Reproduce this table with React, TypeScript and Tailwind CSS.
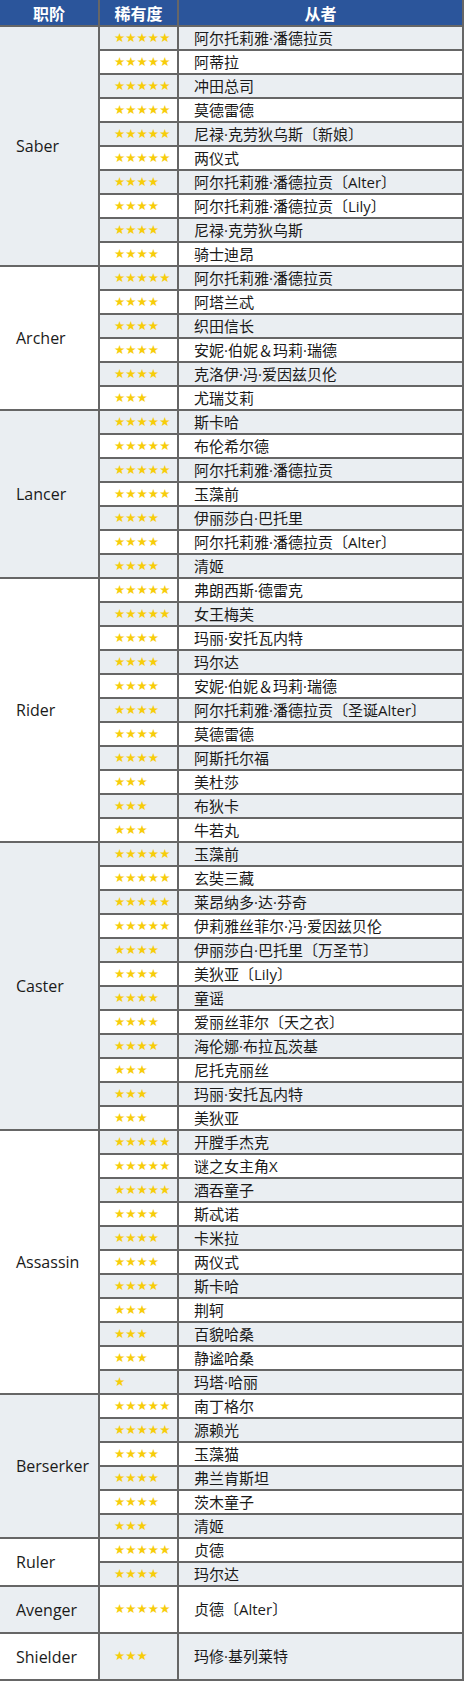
const groups: { cls: string; rows: [number, string][]; tall?: boolean }[] = [
  {
    cls: 'Saber',
    rows: [
      [5, '阿尔托莉雅·潘德拉贡'],
      [5, '阿蒂拉'],
      [5, '冲田总司'],
      [5, '莫德雷德'],
      [5, '尼禄·克劳狄乌斯〔新娘〕'],
      [5, '两仪式'],
      [4, '阿尔托莉雅·潘德拉贡〔Alter〕'],
      [4, '阿尔托莉雅·潘德拉贡〔Lily〕'],
      [4, '尼禄·克劳狄乌斯'],
      [4, '骑士迪昂'],
    ],
  },
  {
    cls: 'Archer',
    rows: [
      [5, '阿尔托莉雅·潘德拉贡'],
      [4, '阿塔兰忒'],
      [4, '织田信长'],
      [4, '安妮·伯妮＆玛莉·瑞德'],
      [4, '克洛伊·冯·爱因兹贝伦'],
      [3, '尤瑞艾莉'],
    ],
  },
  {
    cls: 'Lancer',
    rows: [
      [5, '斯卡哈'],
      [5, '布伦希尔德'],
      [5, '阿尔托莉雅·潘德拉贡'],
      [5, '玉藻前'],
      [4, '伊丽莎白·巴托里'],
      [4, '阿尔托莉雅·潘德拉贡〔Alter〕'],
      [4, '清姬'],
    ],
  },
  {
    cls: 'Rider',
    rows: [
      [5, '弗朗西斯·德雷克'],
      [5, '女王梅芙'],
      [4, '玛丽·安托瓦内特'],
      [4, '玛尔达'],
      [4, '安妮·伯妮＆玛莉·瑞德'],
      [4, '阿尔托莉雅·潘德拉贡〔圣诞Alter〕'],
      [4, '莫德雷德'],
      [4, '阿斯托尔福'],
      [3, '美杜莎'],
      [3, '布狄卡'],
      [3, '牛若丸'],
    ],
  },
  {
    cls: 'Caster',
    rows: [
      [5, '玉藻前'],
      [5, '玄奘三藏'],
      [5, '莱昂纳多·达·芬奇'],
      [5, '伊莉雅丝菲尔·冯·爱因兹贝伦'],
      [4, '伊丽莎白·巴托里〔万圣节〕'],
      [4, '美狄亚〔Lily〕'],
      [4, '童谣'],
      [4, '爱丽丝菲尔〔天之衣〕'],
      [4, '海伦娜·布拉瓦茨基'],
      [3, '尼托克丽丝'],
      [3, '玛丽·安托瓦内特'],
      [3, '美狄亚'],
    ],
  },
  {
    cls: 'Assassin',
    rows: [
      [5, '开膛手杰克'],
      [5, '谜之女主角X'],
      [5, '酒吞童子'],
      [4, '斯忒诺'],
      [4, '卡米拉'],
      [4, '两仪式'],
      [4, '斯卡哈'],
      [3, '荆轲'],
      [3, '百貌哈桑'],
      [3, '静谧哈桑'],
      [1, '玛塔·哈丽'],
    ],
  },
  {
    cls: 'Berserker',
    rows: [
      [5, '南丁格尔'],
      [5, '源赖光'],
      [4, '玉藻猫'],
      [4, '弗兰肯斯坦'],
      [4, '茨木童子'],
      [3, '清姬'],
    ],
  },
  {
    cls: 'Ruler',
    rows: [
      [5, '贞德'],
      [4, '玛尔达'],
    ],
  },
  { cls: 'Avenger', rows: [[5, '贞德〔Alter〕']], tall: true },
  { cls: 'Shielder', rows: [[3, '玛修·基列莱特']], tall: true },
]

const cjk = { fontFamily: '"Noto Sans CJK SC", sans-serif' }
// latin first so the middle dot and Alter/Lily stay narrow
const mixed = { fontFamily: '"Open Sans", "Noto Sans CJK SC", sans-serif' }
const starFont = { fontFamily: '"DejaVu Sans", sans-serif' }

export default function App() {
  let idx = 0
  return (
    <div className="w-[464px] bg-[#666666] flex flex-col gap-[2px] pb-[2px]">
      <div className="flex gap-[2px] pr-[2px] h-[25px]" style={cjk}>
        <div className="w-[98px] bg-[#2b559b] text-white font-bold text-[16px] flex items-center justify-center">职阶</div>
        <div className="w-[77px] bg-[#2b559b] text-white font-bold text-[16px] flex items-center justify-center">稀有度</div>
        <div className="flex-1 bg-[#2b559b] text-white font-bold text-[16px] flex items-center justify-center">从者</div>
      </div>
      {groups.map((g, gi) => (
        <div key={g.cls} className="flex gap-[2px] pr-[2px]">
          <div
            className={`w-[98px] flex items-center pl-[16px] text-[16px] text-[#1a1a1a] ${gi % 2 === 0 ? 'bg-[#eaeef2]' : 'bg-white'}`}
            style={mixed}
          >
            {g.cls}
          </div>
          <div className="flex-1 flex flex-col gap-[2px]">
            {g.rows.map(([stars, name]) => {
              const light = idx++ % 2 === 0
              const bg = light ? 'bg-[#eaeef2]' : 'bg-white'
              return (
                <div key={name + idx} className={`flex gap-[2px] ${g.tall ? 'h-[45px]' : 'h-[22px]'}`}>
                  <div className={`w-[77px] ${bg} flex items-center pl-[14px]`}>
                    <span className="text-[12.6px] leading-none text-[#f7cd0a]" style={starFont}>
                      {'★'.repeat(stars)}
                    </span>
                  </div>
                  <div className={`flex-1 ${bg} flex items-center pl-[15px] text-[15px] text-[#1a1a1a] whitespace-nowrap`} style={mixed}>
                    {name}
                  </div>
                </div>
              )
            })}
          </div>
        </div>
      ))}
    </div>
  )
}
